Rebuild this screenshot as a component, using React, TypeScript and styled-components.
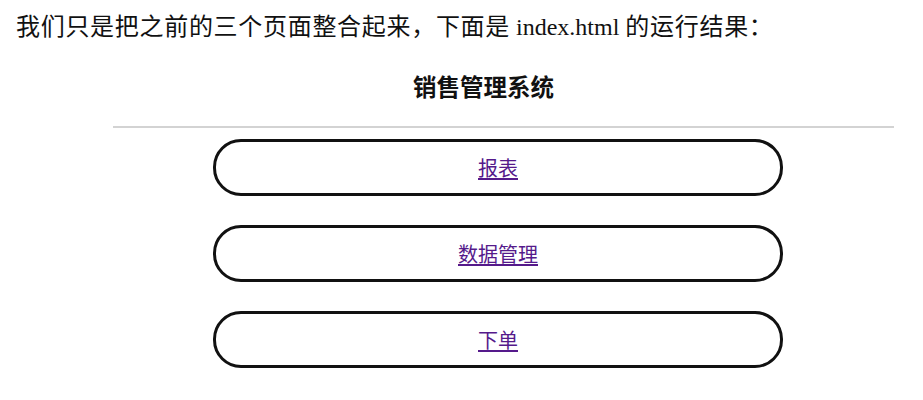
import React from "react";
import styled, { createGlobalStyle } from "styled-components";

const Global = createGlobalStyle`
  html, body { margin: 0; padding: 0; background: #fff; }
  body { font-family: "Liberation Serif", "Noto Sans CJK SC", serif; }
`;

const Intro = styled.p`
  margin: 0;
  padding: 12px 0 0 16px;
  height: 30px;
  line-height: 30px;
  font-size: 24px;
  color: #111;
  font-family: "Liberation Serif", "Noto Sans CJK SC", serif;
  white-space: nowrap;
`;

const Cjk = styled.span`
  letter-spacing: 0.7px;
`;

const Page = styled.div`
  margin-left: 113px;
  width: 781px;
  font-family: "Noto Sans CJK SC", sans-serif;
`;

const Title = styled.h1`
  margin: 0;
  padding: 27px 40px 0 0;
  height: 57px;
  line-height: 34px;
  text-align: center;
  font-size: 23.5px;
  font-weight: 700;
  color: #111;
`;

const Rule = styled.hr`
  margin: 0;
  height: 0;
  border: none;
  border-top: 2px solid #d3d3d3;
`;

const Menu = styled.nav`
  display: flex;
  flex-direction: column;
  gap: 29px;
  padding: 11px 0 0 100px;
`;

const Item = styled.div`
  box-sizing: border-box;
  width: 570px;
  height: 57px;
  border: 3px solid #111;
  border-radius: 28px;
  display: flex;
  align-items: center;
  justify-content: center;
`;

const Link = styled.a`
  font-size: 20px;
  color: #551a8b;
  text-decoration: underline;
  text-underline-offset: 2px;
  line-height: 1;
`;

export default function App() {
  return (
    <>
      <Global />
      <Intro>
        <Cjk>我们只是把之前的三个页面整合起来，下面是</Cjk> index.html{" "}
        <Cjk>的运行结果：</Cjk>
      </Intro>
      <Page>
        <Title>销售管理系统</Title>
        <Rule />
        <Menu>
          {["报表", "数据管理", "下单"].map((t) => (
            <Item key={t}>
              <Link href="#">{t}</Link>
            </Item>
          ))}
        </Menu>
      </Page>
    </>
  );
}
